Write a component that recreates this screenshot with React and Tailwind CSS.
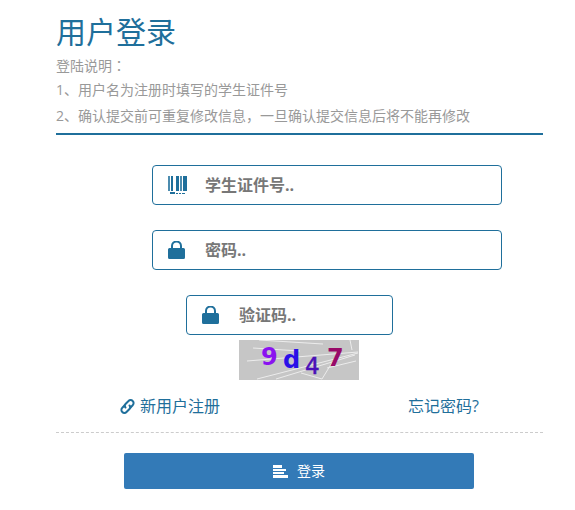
import React from 'react'

const LockIcon = () => (
  <svg width="17" height="18" viewBox="0 0 17 18" className="text-[#1f6f9b]">
    <path fill="currentColor" fillRule="evenodd" d="M3 7V5a5 5 0 0 1 11 0v2h1.500A1.500 1.500 0 0 1 17 8.500v8a1.500 1.500 0 0 1-1.500 1.500h-14A1.500 1.500 0 0 1 0 16.500v-8A1.500 1.500 0 0 1 1.500 7zM5 7h7V5a3 3 0 0 0-7 0z" />
  </svg>
)

const BarcodeIcon = () => (
  <svg width="19" height="18" viewBox="0 0 19 18" className="text-[#1f6f9b]">
    <g fill="currentColor">
      <rect x="0" y="0" width="2" height="15" opacity="0.8" />
      <rect x="3" y="0" width="2" height="15" />
      <rect x="8" y="0" width="3" height="15" />
      <rect x="12" y="0" width="2" height="15" opacity="0.8" />
      <rect x="15" y="0" width="4" height="15" />
      <rect x="2" y="16" width="5" height="2" />
      <rect x="8" y="17" width="2" height="1" />
      <rect x="11" y="17" width="2" height="1" />
      <rect x="14" y="17" width="3" height="1" />
    </g>
  </svg>
)

const LinkIcon = () => (
  <svg width="15" height="15" viewBox="0 0 15 15" className="text-[#1f6f9b]">
    <g fill="none" stroke="currentColor" strokeWidth="2" strokeLinecap="round">
      <path d="M5.500 8.500a2.500 2.500 0 0 1 0-3.500L8.500 2a2.900 2.900 0 0 1 4.200 0a2.900 2.900 0 0 1 0 4.200L10.500 8.500" />
      <path d="M9.500 6.500a2.500 2.500 0 0 1 0 3.500L6.500 13a2.900 2.900 0 0 1-4.200 0a2.900 2.900 0 0 1 0-4.200L4.500 6.500" />
    </g>
  </svg>
)

const ListIcon = () => (
  <svg width="15" height="13" viewBox="0 0 15 13" className="text-white">
    <g fill="currentColor">
      <rect x="0" y="0" width="9" height="3" />
      <rect x="0" y="4" width="13" height="2" />
      <rect x="0" y="7" width="11" height="2" />
      <rect x="0" y="10" width="15" height="3" />
    </g>
  </svg>
)

const Captcha = () => (
  <svg width="120" height="40" viewBox="0 0 120 40" className="block">
    <rect width="120" height="40" fill="#c6c6c6" />
    <g stroke="#ececec" strokeWidth="1" fill="none">
      <path d="M20 0 L84 4" />
      <path d="M14 8 L61 11" />
      <path d="M8 21 L119 12" />
      <path d="M18 39 L119 13" />
      <path d="M37 39 L116 15" />
      <path d="M62 33 L83 39" />
      <path d="M83 39 L102 8" />
      <path d="M111 0 L113 10" />
      <path d="M88 28 L117 21" />
    </g>
    <g fontFamily="'DejaVu Sans', sans-serif" fontWeight="700">
      <text x="22" y="25" fontSize="24" fill="#8a12f0">9</text>
      <text x="44" y="28" fontSize="24" fill="#2a10e8">d</text>
      <text x="66" y="34" fontSize="23" fontWeight="400" stroke="#4a10b8" strokeWidth="0.5" fill="#4a10b8">4</text>
      <text x="88" y="26" fontSize="24" fill="#980a68">7</text>
    </g>
  </svg>
)

const Field = ({ icon, placeholder, className }) => (
  <div className={`h-10 flex items-center border border-[#1f6f9b] rounded-[4px] bg-white ${className}`}>
    <div className="w-[52px] pl-[15px] shrink-0 flex items-center">{icon}</div>
    <input
      type="text"
      placeholder={placeholder}
      className="flex-1 min-w-0 outline-none text-base font-bold text-[#777] placeholder:text-[#777]"
    />
  </div>
)

export default function App() {
  return (
    <div className="w-[575px] h-[510px] bg-white overflow-hidden font-['Open_Sans','Noto_Sans_CJK_SC',sans-serif]">
      <div className="w-[487px] ml-[56px]">
        <h1 className="pt-[10px] text-[30px] leading-[43px] text-[#1f6f9b]">用户登录</h1>
        <div className="border-b-2 border-[#1f6f9b] pb-[5px] text-sm text-[#999]">
          <p className="leading-[24px]">登陆说明<span className="font-['Noto_Sans_CJK_TC']">：</span></p>
          <p className="leading-[24px]">1、用户名为注册时填写的学生证件号</p>
          <p className="leading-[24px] mt-[2px]">2、确认提交前可重复修改信息，一旦确认提交信息后将不能再修改</p>
        </div>

        <form className="flex flex-col mt-[30px]">
          <Field icon={<BarcodeIcon />} placeholder="学生证件号.." className="w-[350px] ml-[96px]" />
          <Field icon={<LockIcon />} placeholder="密码.." className="w-[350px] ml-[96px] mt-[25px]" />
          <Field icon={<LockIcon />} placeholder="验证码.." className="w-[207px] ml-[130px] mt-[25px]" />
          <div className="ml-[183px] mt-[5px]"><Captcha /></div>
        </form>

        <div className="flex items-center justify-between h-[26px] mt-[13px] pl-[64px] pr-[64px] text-base text-[#1f6f9b]">
          <a className="flex items-center gap-[5px]">
            <LinkIcon />
            新用户注册
          </a>
          <a>忘记密码?</a>
        </div>

        <div className="mt-[13px] border-t border-dashed border-[#ccc]" />

        <button className="flex items-center justify-center gap-[9px] w-[350px] h-9 ml-[68px] mt-[20px] bg-[#337ab7] rounded-[2px] text-sm text-white">
          <ListIcon />
          登录
        </button>
      </div>
    </div>
  )
}
